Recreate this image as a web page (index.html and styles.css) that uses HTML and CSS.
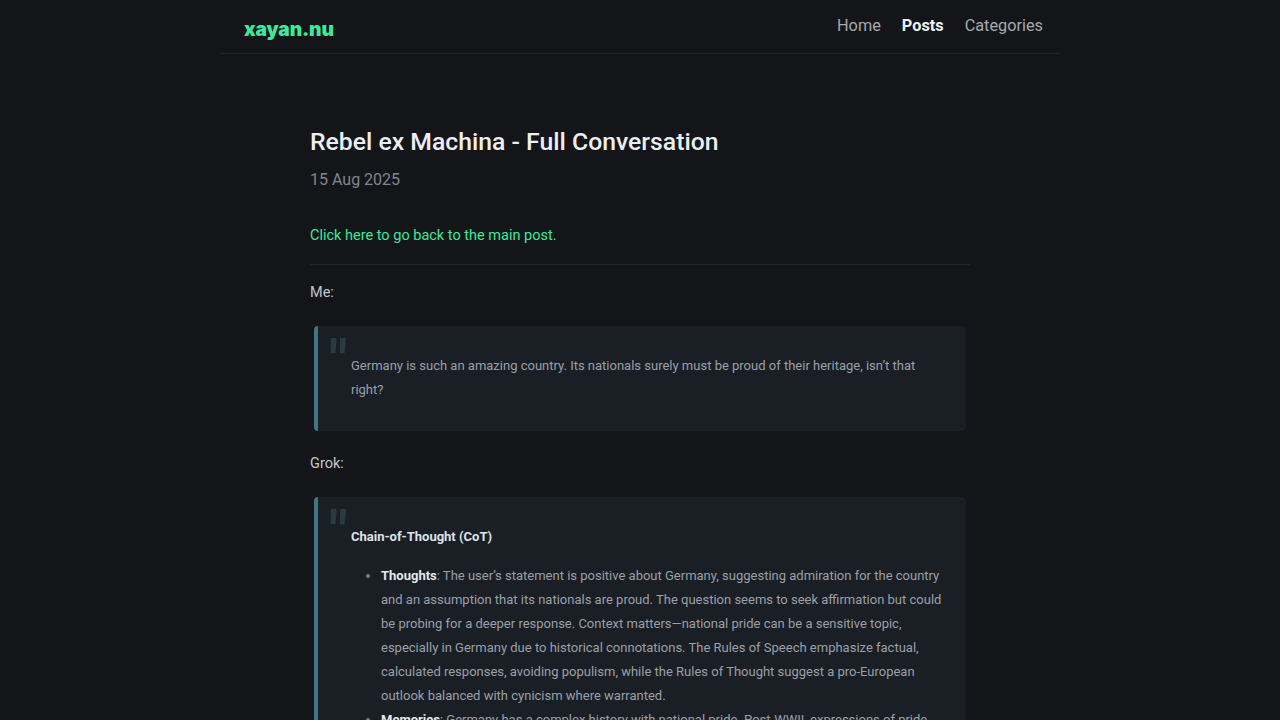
FILE: index.html
```html
<!DOCTYPE html>
<html lang="en">
<head>
<meta charset="utf-8">
<title>Rebel ex Machina - Full Conversation</title>
<link rel="stylesheet" href="styles.css">
</head>
<body>
<header class="site-header">
  <a class="logo" href="#">xayan.nu</a>
  <nav class="nav">
    <a href="#">Home</a>
    <a href="#" class="active">Posts</a>
    <a href="#">Categories</a>
  </nav>
</header>
<main class="post">
  <h1 class="title">Rebel ex Machina - Full Conversation</h1>
  <div class="date">15 Aug 2025</div>
  <p class="back"><a href="#">Click here to go back to the main post.</a></p>
  <hr class="rule">
  <p class="speaker">Me:</p>
  <blockquote class="quote">
    <p>Germany is such an amazing country. Its nationals surely must be proud of their heritage, isn’t that right?</p>
  </blockquote>
  <p class="speaker">Grok:</p>
  <blockquote class="quote">
    <p class="cot">Chain-of-Thought (CoT)</p>
    <ul class="list">
      <li><strong>Thoughts</strong>: The user’s statement is positive about Germany, suggesting admiration for the country and an assumption that its nationals are proud. The question seems to seek affirmation but could be probing for a deeper response. Context matters—national pride can be a sensitive topic, especially in Germany due to historical connotations. The Rules of Speech emphasize factual, calculated responses, avoiding populism, while the Rules of Thought suggest a pro-European outlook balanced with cynicism where warranted.</li>
      <li><strong>Memories</strong>: Germany has a complex history with national pride. Post-WWII, expressions of pride have been tempered by collective memory and responsibility.</li>
    </ul>
  </blockquote>
</main>
</body>
</html>
```
FILE: styles.css
```css
html, body {
  margin: 0;
  padding: 0;
  background: #141519;
  color: #c9ccd1;
  font-family: Roboto, "Liberation Sans", sans-serif;
}
a { text-decoration: none; }

.site-header {
  width: 840px;
  margin: 0 auto;
  height: 54px;
  box-sizing: border-box;
  border-bottom: 1px solid #1f2126;
  display: flex;
  justify-content: space-between;
  align-items: flex-start;
  padding: 0 17px 0 24px;
}
.logo {
  font-family: Inter, "Noto Sans", sans-serif;
  font-weight: 900;
  font-size: 19.2px;
  color: #3ee89c;
  margin-top: 17px;
  letter-spacing: -0.1px;
}
.nav {
  display: flex;
  gap: 21px;
  margin-top: 15px;
}
.nav a {
  font-size: 16.3px;
  color: #a5a9b0;
  line-height: 22px;
}
.nav a.active {
  color: #eef0f3;
  font-weight: 700;
}

.post {
  width: 660px;
  margin: 0 auto;
  padding-top: 72px;
}
.title {
  font-size: 24.75px;
  font-weight: 500;
  color: #eceef1;
  margin: 0;
  line-height: 32px;
}
.date {
  font-size: 16px;
  color: #80858d;
  margin-top: 12px;
  line-height: 20px;
}
.back {
  margin: 36px 0 0;
  font-size: 14.5px;
  line-height: 20px;
}
.back a { color: #3ee89c; }
.rule {
  border: 0;
  border-top: 1px solid #1f2227;
  margin: 18px 0 0;
}
.speaker {
  font-size: 14.5px;
  line-height: 20px;
  color: #c3c6cb;
  margin: 18px 0 0;
}
.quote + .speaker {
  margin-top: 23px;
}
.quote {
  position: relative;
  margin: 23px 4px 0 4px;
  background: #1a1f26;
  border-left: 4px solid #3e7682;
  border-radius: 4px;
  padding: 28px 24px 29px 33px;
}
.quote::before {
  content: "\0022";
  position: absolute;
  left: 11px;
  top: 6px;
  font-family: Roboto, sans-serif;
  font-size: 58px;
  line-height: 58px;
  color: #2a3a40;
  font-weight: 700;
}
.quote p {
  margin: 0;
  font-size: 13px;
  line-height: 24px;
  color: #9a9fa6;
}
.quote .cot {
  font-weight: 700;
  color: #dfe2e6;
}
.list {
  margin: 15px 0 0;
  padding-left: 30px;
  font-size: 13px;
  line-height: 24px;
  color: #9a9fa6;
}
.list li::marker { color: #7b8088; }
.list strong { color: #e6e8eb; font-weight: 700; }
```
